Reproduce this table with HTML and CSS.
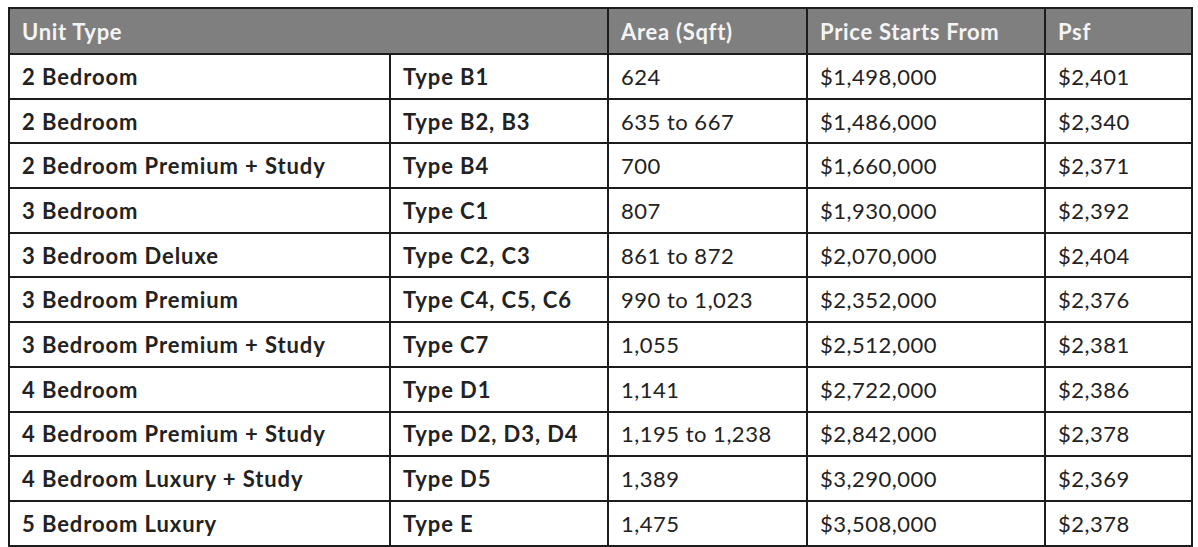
FILE: index.html
```html
<!DOCTYPE html>
<html>
<head>
<meta charset="utf-8">
<link rel="stylesheet" href="styles.css">
</head>
<body>
<table class="price-table">
  <colgroup>
    <col class="c-unit"><col class="c-type"><col class="c-area"><col class="c-price"><col class="c-psf">
  </colgroup>
  <thead>
    <tr><th colspan="2">Unit Type</th><th>Area (Sqft)</th><th>Price Starts From</th><th>Psf</th></tr>
  </thead>
  <tbody>
    <tr><td class="b">2 Bedroom</td><td class="b">Type B1</td><td>624</td><td>$1,498,000</td><td>$2,401</td></tr>
    <tr><td class="b">2 Bedroom</td><td class="b">Type B2, B3</td><td>635 to 667</td><td>$1,486,000</td><td>$2,340</td></tr>
    <tr><td class="b">2 Bedroom Premium + Study</td><td class="b">Type B4</td><td>700</td><td>$1,660,000</td><td>$2,371</td></tr>
    <tr><td class="b">3 Bedroom</td><td class="b">Type C1</td><td>807</td><td>$1,930,000</td><td>$2,392</td></tr>
    <tr><td class="b">3 Bedroom Deluxe</td><td class="b">Type C2, C3</td><td>861 to 872</td><td>$2,070,000</td><td>$2,404</td></tr>
    <tr><td class="b">3 Bedroom Premium</td><td class="b">Type C4, C5, C6</td><td>990 to 1,023</td><td>$2,352,000</td><td>$2,376</td></tr>
    <tr><td class="b">3 Bedroom Premium + Study</td><td class="b">Type C7</td><td>1,055</td><td>$2,512,000</td><td>$2,381</td></tr>
    <tr><td class="b">4 Bedroom</td><td class="b">Type D1</td><td>1,141</td><td>$2,722,000</td><td>$2,386</td></tr>
    <tr><td class="b">4 Bedroom Premium + Study</td><td class="b">Type D2, D3, D4</td><td>1,195 to 1,238</td><td>$2,842,000</td><td>$2,378</td></tr>
    <tr><td class="b">4 Bedroom Luxury + Study</td><td class="b">Type D5</td><td>1,389</td><td>$3,290,000</td><td>$2,369</td></tr>
    <tr><td class="b">5 Bedroom Luxury</td><td class="b">Type E</td><td>1,475</td><td>$3,508,000</td><td>$2,378</td></tr>
  </tbody>
</table>
</body>
</html>
```
FILE: styles.css
```css
html, body {
  margin: 0;
  padding: 0;
  background: #ffffff;
}
body {
  padding: 7px 0 0 8px;
  font-family: Lato, "Noto Sans", sans-serif;
}
.price-table {
  border-collapse: collapse;
  table-layout: fixed;
  width: 1183px;
  color: #222222;
  font-size: 22px;
}
.c-unit { width: 381px; }
.c-type { width: 218px; }
.c-area { width: 199px; }
.c-price { width: 238px; }
.c-psf { width: 147px; }
.price-table th,
.price-table td {
  border: 2px solid #1c1c1c;
  text-align: left;
  padding: 0 0 0 12px;
  white-space: nowrap;
}
.price-table th {
  background: #7f7f7f;
  color: #f4f4f4;
  font-weight: 700;
  height: 43px;
  letter-spacing: 0.7px;
  padding-top: 1px;
}
.price-table td {
  height: 42.7px;
  font-weight: 400;
  letter-spacing: 0.5px;
}
.price-table td.b {
  font-weight: 700;
  letter-spacing: 0.9px;
}
```
